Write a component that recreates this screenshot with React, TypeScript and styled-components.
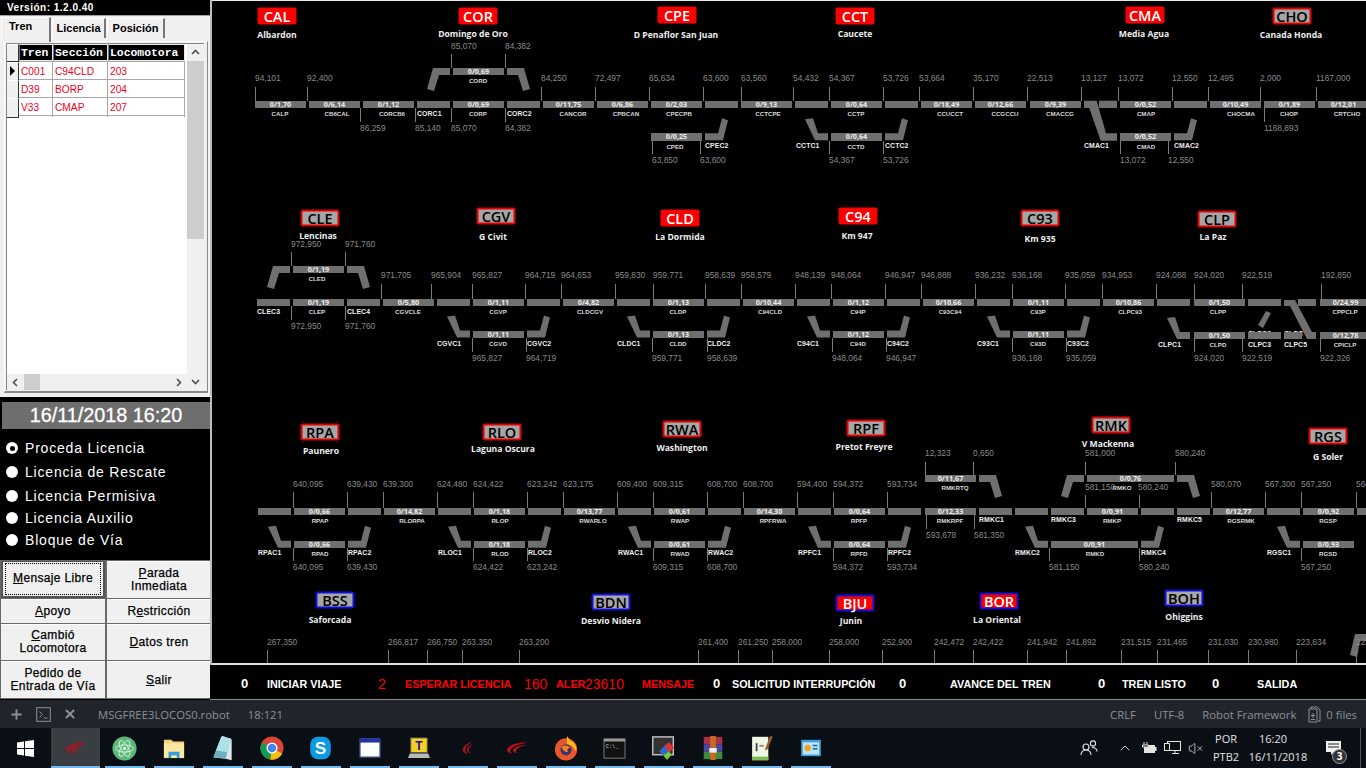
import React from 'react';
import styled, { createGlobalStyle } from 'styled-components';
import { ChevronUp, VolumeX, Plus, X } from 'lucide-react';

const Global = createGlobalStyle`
  html, body { margin: 0; padding: 0; background: #000; }
  * { box-sizing: border-box; }
`;

const OX = 210;
const SANS = '"Liberation Sans", Arial, sans-serif';

const Page = styled.div`
  width: 1366px; height: 768px; overflow: hidden; display: flex; flex-direction: column;
  font-family: ${SANS};
`;
const Main = styled.div`display: flex; height: 700px; background: #000;`;

/* ---------- left panel ---------- */
const Left = styled.aside`width: 210px; height: 700px; display: flex; flex-direction: column; background: #000;`;
const Version = styled.div`
  height: 16px; padding: 0 0 0 7px; background: #000; color: #fff; font-weight: 700; font-size: 10px;
  letter-spacing: .5px; line-height: 16px; border-bottom: 1px solid #a0a0a0; flex: none;
`;
const TabArea = styled.div`height: 381px; flex: none; background: #f0f0f0; padding: 1px 0 0 1px; display: flex; flex-direction: column;`;
const Tabs = styled.div`display: flex; align-items: flex-end; height: 24px; gap: 1px; position: relative; z-index: 1;`;
const Tab = styled.div<{ $active?: boolean; $w: number }>`
  width: ${p => p.$w}px; height: ${p => (p.$active ? 25 : 20)}px; margin-bottom: ${p => (p.$active ? -1 : 3)}px;
  background: #f0f0f0; color: #000; font-weight: 700; font-size: 11px;
  line-height: ${p => (p.$active ? 17 : 19)}px; text-align: ${p => (p.$active ? 'left' : 'center')};
  padding-left: ${p => (p.$active ? 7 : 0)}px;
  border-top: 1px solid #fff; border-left: 1px solid #fff; border-right: 2px solid #777;
`;
const TabBody = styled.div`
  margin: 0 0 0 3px; width: 204px; height: 352px; background: #f0f0f0;
  border-top: 1px solid #fff; border-left: 1px solid #fff; border-right: 1px solid #888; border-bottom: 2px solid #888;
  padding: 1px 0 0 1px;
`;
const GridBox = styled.div`
  width: 198px; height: 347px; background: #fff; border-top: 1px solid #888; border-left: 1px solid #888;
  display: grid; grid-template-columns: 180px 17px; grid-template-rows: 330px 16px;
`;
const GridRows = styled.div`display: flex; flex-direction: column; overflow: hidden; grid-column: 1; grid-row: 1;`;
const GridRow = styled.div<{ $h: number }>`
  display: grid; grid-template-columns: 12px 34px 55px 77px; height: ${p => p.$h}px; border-bottom: 1px solid #a8a8a8; width: 178px; flex: none;
`;
const Indicator = styled.div`
  background: #f0f0f0; border-right: 1px solid #333; border-bottom: 1px solid #333; border-top: 1px solid #fff;
  position: relative; margin-bottom: -1px;
`;
const Arrow = styled.div`
  position: absolute; left: 3px; top: 3px; width: 0; height: 0;
  border-top: 5px solid transparent; border-bottom: 5px solid transparent; border-left: 5px solid #000;
`;
const HeadCell = styled.div`
  background: #000; color: #fff; font: 700 11.4px/16px "Liberation Mono", monospace; padding-left: 1px;
  border: 1px solid #e8e8e8; border-left-color: #777; white-space: nowrap; overflow: hidden;
`;
const Cell = styled.div`
  color: #f00020; font-size: 10.2px; line-height: 19px; padding-left: 2px; border-right: 1px solid #a8a8a8;
`;
const VBar = styled.div`display: flex; flex-direction: column; background: #f0f0f0; grid-column: 2; grid-row: 1 / 3;`;
const HBar = styled.div`display: flex; background: #f0f0f0; height: 16px; align-items: stretch; grid-column: 1; grid-row: 2;`;
const ScrollBtn = styled.div<{ $size: number }>`
  flex: 0 0 ${p => p.$size}px; display: flex; align-items: center; justify-content: center; color: #505050;
`;
const VThumb = styled.div`height: 178px; background: #cdcdcd;`;
const HThumb = styled.div`width: 16px; background: #cdcdcd;`;
const Fill = styled.div`flex: 1;`;

const Lower = styled.div`height: 163px; flex: none; background: #000; padding: 5px 0 0 2px;`;
const DateBar = styled.div`
  height: 27px; background: #6e6e6e; color: #fff; font-size: 19.8px; line-height: 27px; text-align: center;
  -webkit-text-stroke: .3px #fff;
`;
const Radios = styled.div`display: flex; flex-direction: column; padding: 7px 0 0 4px;`;
const RadioRow = styled.label<{ $h: number }>`
  display: flex; align-items: center; gap: 7px; height: ${p => p.$h}px; color: #fff; font-size: 14px; letter-spacing: .8px;
`;
const RadioDot = styled.span<{ $on?: boolean }>`
  width: 12px; height: 12px; border-radius: 50%; flex: none; display: flex; align-items: center; justify-content: center;
  background: radial-gradient(circle at 40% 40%, #fff 55%, #b8b8b8 100%);
  &::after { content: ''; width: 5px; height: 5px; border-radius: 50%; background: ${p => (p.$on ? '#000' : 'transparent')}; }
`;
const Buttons = styled.div`
  height: 139px; flex: none; background: #696969; display: grid; grid-template-columns: 104px 104px; gap: 1px 2px; padding: 1px 0 1px 1px;
`;
const Btn = styled.button<{ $focus?: boolean }>`
  appearance: none; margin: 0; padding: 0; background: #f0f0f0; color: #000; position: relative;
  font: 400 12px/13px ${SANS}; letter-spacing: .35px; -webkit-text-stroke: .25px #000;
  border: ${p => (p.$focus ? '2px solid #555' : '0')};
  border-top: 1px solid ${p => (p.$focus ? '#555' : '#fff')};
  ${p => p.$focus && `&::after { content: ''; position: absolute; inset: 1px 2px; border: 1px dotted #000; }`}
  u { text-decoration: underline; }
`;

/* ---------- right part and diagram ---------- */
const Right = styled.div`flex: 1; display: flex; flex-direction: column; height: 700px; position: relative;`;
const Diagram = styled.div`
  height: 665px; position: relative; overflow: hidden; background: #000;
  box-shadow: inset 2px 0 0 #bdbdbd, inset 0 1px 0 #e8e8e8, inset 0 -2px 0 #e0e0e0;
`;
const Curves = styled.svg`position: absolute; left: 0; top: 0; width: 1156px; height: 665px;`;
const Seg = styled.div.attrs<{ $x: number; $y: number; $w: number }>(p => ({
  style: { left: p.$x - OX, top: p.$y, width: p.$w },
}))`
  position: absolute; height: 7.4px; background: #6f6f6f; color: #ededed; text-align: center;
  font-size: 7.2px; line-height: 7.5px; font-weight: 700; font-family: "Open Sans", sans-serif;
`;
const Km = styled.span.attrs<{ $x: number; $y: number }>(p => ({
  style: { left: p.$x - OX, top: p.$y - 6 },
}))`
  position: absolute; color: #8a8a8a; font-size: 8.4px; line-height: 12px; white-space: nowrap;
`;
const Tick = styled.i.attrs<{ $x: number; $y: number; $h: number }>(p => ({
  style: { left: p.$x - OX, top: p.$y, height: p.$h },
}))`
  position: absolute; width: 1px; background: #7a7a7a;
`;
const SmallName = styled.span.attrs<{ $x: number; $y: number }>(p => ({
  style: { left: p.$x - OX, top: p.$y - 5 },
}))`
  position: absolute; transform: translateX(-50%); color: #d8d8d8; font-size: 6.2px; line-height: 10px; white-space: nowrap; font-weight: 700;
`;
const BigName = styled.span.attrs<{ $x: number; $y: number }>(p => ({
  style: { left: p.$x - OX, top: p.$y - 6 },
}))`
  position: absolute; color: #f0f0f0; font-size: 6.9px; line-height: 12px; letter-spacing: .1px; white-space: nowrap; font-weight: 700;
`;
type BadgeKind = 'red' | 'grey' | 'blueRed' | 'blueGrey';
const Badge = styled.div.attrs<{ $x: number; $y: number; $k: BadgeKind }>(p => ({
  style: { left: p.$x - OX, top: p.$y },
}))`
  position: absolute; transform: translate(-50%, -50%); height: 17px; width: 39px; border-radius: 2px; text-align: center;
  font: 600 14.5px/14px "Open Sans", sans-serif;
  background: ${p => (p.$k === 'red' || p.$k === 'blueRed' ? '#fb0000' : '#a6a6a6')};
  color: ${p => (p.$k === 'red' || p.$k === 'blueRed' ? '#fff' : '#000')};
  border: 2px solid ${p => (p.$k === 'red' ? '#fb0000' : p.$k === 'grey' ? '#e00000' : '#1010d8')};
`;
const Place = styled.span.attrs<{ $x: number; $y: number }>(p => ({
  style: { left: p.$x - OX, top: p.$y - 6 },
}))`
  position: absolute; transform: translateX(-50%); color: #eee; font: 700 8.6px/12px "Open Sans", sans-serif; white-space: nowrap;
`;

const Status = styled.div`
  height: 35px; display: flex; align-items: center; background: #000; padding: 3px 0 0 31px; border-bottom: 1px solid #8a8a8a;
  white-space: nowrap;
`;
const Stat = styled.span.attrs<{ $w: number }>(p => ({ style: { width: p.$w } }))<{ $kind: 'label' | 'num'; $red?: boolean }>`
  flex: none; color: ${p => (p.$red ? '#f00' : '#fff')};
  font: ${p => (p.$kind === 'label' ? '700 10.8px' : p.$red ? '400 14px' : '700 13px')} ${SANS};
`;

/* ---------- atom bar + taskbar ---------- */
const AtomBar = styled.div`
  height: 28px; flex: none; background: #21252b; color: #8b9099; display: flex; align-items: center; font: 400 11.3px "Open Sans", sans-serif;
`;
const AtomTool = styled.span<{ $w: number }>`width: ${p => p.$w}px; flex: none; display: flex; justify-content: center; align-items: center;`;
const AtomText = styled.span<{ $ml?: number }>`margin-left: ${p => p.$ml ?? 0}px; white-space: nowrap;`;
const AtomRight = styled.div`margin-left: auto; display: flex; align-items: center; padding-right: 9px;`;
const FilesIcon = styled.svg`display: block;`;
const Taskbar = styled.div`height: 40px; flex: none; background: #0a0f15; display: flex; align-items: stretch; color: #e8e8e8;`;
const StartBtn = styled.div`width: 51px; flex: none; display: flex; align-items: center; justify-content: center;`;
const TaskItem = styled.div<{ $active?: boolean }>`
  width: 49px; flex: none; display: flex; align-items: center; justify-content: center; position: relative;
  background: ${p => (p.$active ? '#3a3d42' : 'transparent')};
  &::after { content: ''; position: absolute; bottom: 0; height: 2px; background: #76b9ed;
    left: ${p => (p.$active ? 0 : 4.5)}px; right: ${p => (p.$active ? 0 : 4.5)}px; }
`;
const Tray = styled.div`margin-left: auto; display: flex; align-items: center; padding-right: 5px;`;
const TrayCell = styled.div<{ $w: number; $ml?: number }>`
  width: ${p => p.$w}px; margin-left: ${p => p.$ml ?? 0}px; flex: none; display: flex; flex-direction: column; align-items: center; justify-content: center;
  font: 400 11px/18px "Open Sans", sans-serif; color: #e4e4e4; position: relative; white-space: nowrap;
`;
const ClockTime = styled.span`margin-right: 10px;`;
const NotifyBadge = styled.span`
  position: absolute; left: 19px; top: 9px; width: 15px; height: 15px; border-radius: 50%; background: #333; border: 1px solid #999;
  color: #fff; font-size: 10px; line-height: 13px; text-align: center; font-weight: 700;
`;
const EdgeLine = styled.i`width: 1px; height: 40px; background: #555; margin-left: 7px;`;

/* ---------- data ---------- */
type Long = [number, string, string, number, number?];
type Track = { y: number; nameY: number; longs: Long[]; shorts?: number[] };
const tracks: Track[] = [
  { y: 100.7, nameY: 113.5, shorts: [417, 507, 705, 795, 885, 1174], longs: [
    [255, '0/1,70', 'CALP', 280], [309, '0/6,14', 'CB6CAL', 337], [363, '0/1,12', 'CORCB6', 392], [453, '0/0,69', 'CORP', 478],
    [543, '0/11,75', 'CANCOR', 573], [597, '0/6,86', 'CPBCAN', 626], [651, '0/2,03', 'CPECPB', 679], [741, '0/9,13', 'CCTCPE', 768],
    [831, '0/0,64', 'CCTP', 856], [921, '0/18,49', 'CCUCCT', 950], [975, '0/12,66', 'CCGCCU', 1005], [1030, '0/9,39', 'CMACCG', 1060],
    [1120, '0/0,52', 'CMAP', 1146], [1210, '0/10,49', 'CHOCMA', 1241], [1264, '0/1,89', 'CHOP', 1289], [1318, '0/12,01', 'CRTCHO', 1347],
  ] },
  { y: 68, nameY: 81, longs: [[453, '0/0,69', 'CORD', 478]] },
  { y: 133.3, nameY: 146.5, longs: [[651, '0/0,25', 'CPED', 675], [831, '0/0,64', 'CCTD', 856], [1120, '0/0,52', 'CMAD', 1146]] },
  { y: 298.7, nameY: 311.5, shorts: [257, 347, 437, 527, 617, 707, 797, 887, 977, 1067, 1157, 1248], longs: [
    [293, '0/1,19', 'CLEP', 317], [383, '0/5,80', 'CGVCLE', 408], [473, '0/1,11', 'CGVP', 498], [563, '0/4,82', 'CLDCGV', 590],
    [653, '0/1,13', 'CLDP', 678], [743, '0/10,44', 'C94CLD', 770], [833, '0/1,12', 'C94P', 858], [923, '0/10,66', 'C93C94', 950],
    [1013, '0/1,11', 'C93P', 1038], [1103, '0/10,86', 'CLPC93', 1130], [1194, '0/1,50', 'CLPP', 1218], [1320, '0/24,99', 'CPPCLP', 1345],
  ] },
  { y: 266, nameY: 279, longs: [[293, '0/1,19', 'CLED', 317]] },
  { y: 330.5, nameY: 343.5, longs: [[473, '0/1,11', 'CGVD', 498], [653, '0/1,13', 'CLDD', 678], [833, '0/1,12', 'C94D', 858], [1013, '0/1,11', 'C93D', 1038]] },
  { y: 332, nameY: 345, shorts: [1248, 1284], longs: [[1194, '0/1,50', 'CLPD', 1218], [1320, '0/12,78', 'CPICLP', 1345]] },
  { y: 507.7, nameY: 521, shorts: [258, 348, 438, 528, 618, 708, 798, 888, 979, 1015, 1051, 1141, 1177, 1267, 1357], longs: [
    [294, '0/0,66', 'RPAP', 320], [384, '0/14,82', 'RLORPA', 412], [474, '0/1,18', 'RLOP', 500], [564, '0/13,77', 'RWARLO', 593],
    [654, '0/0,61', 'RWAP', 680], [744, '0/14,30', 'RPFRWA', 773], [834, '0/0,64', 'RPFP', 859], [925, '0/12,33', 'RMKRPF', 950],
    [1087, '0/0,91', 'RMKP', 1112], [1213, '0/12,77', 'RGSRMK', 1241], [1303, '0/0,92', 'RGSP', 1328],
  ] },
  { y: 475, nameY: 488, longs: [[925, '0/11,67', 'RMKRTQ', 955], [1087, '0/0,76', 'RMKO', 1122, 87]] },
  { y: 540.7, nameY: 553.5, longs: [[294, '0/0,66', 'RPAD', 320], [474, '0/1,18', 'RLOD', 500], [654, '0/0,61', 'RWAD', 680], [834, '0/0,64', 'RPFD', 859], [1051, '0/0,91', 'RMKD', 1095, 87], [1303, '0/0,93', 'RGSD', 1328]] },
];

const SHAPES: Record<string, number[]> = {
  A: [33, 0, 16, 0, 10, 21, 17, 23, 22, 7, 33, 7],
  B: [0, 0, 17, 0, 23, 21, 16, 23, 11, 7, 0, 7],
  C: [10, -14, 18, -15, 23, 0, 33, 0, 33, 7, 20, 7],
  D: [0, 0, 13, 0, 17, -15, 23, -13, 18, 7, 0, 7],
};
const placed: [string, number, number][] = [
  ['A', 417, 68], ['B', 507, 68], ['D', 705, 133.3], ['C', 795, 133.3], ['D', 885, 133.3], ['D', 1174, 133.3],
  ['A', 257, 266], ['B', 347, 266],
  ...[437, 617, 797, 977].map(x => ['C', x, 330.5] as [string, number, number]),
  ...[527, 707, 887, 1067].map(x => ['D', x, 330.5] as [string, number, number]),
  ['C', 1157, 332],
  ['B', 979, 475], ['A', 1051, 475], ['B', 1177, 475],
  ...[258, 438, 618, 798, 1015, 1267].map(x => ['C', x, 540.7] as [string, number, number]),
  ...[348, 528, 708, 888, 1141].map(x => ['D', x, 540.7] as [string, number, number]),
];
const rawPolys: number[][] = [
  [1084, 100.7, 1096.7, 100.7, 1106, 133.3, 1117, 133.3, 1117, 140.7, 1100.7, 140.7, 1089.3, 108, 1084, 108],
  [1099, 100.7, 1117, 100.7, 1117, 108, 1099, 108],
  [1258, 325, 1266, 311, 1271, 313, 1263, 328],
  [1284, 300, 1295, 300, 1312, 332, 1316, 332, 1316, 339, 1307, 339, 1290, 306, 1284, 306],
  [1298, 299, 1316, 299, 1316, 306, 1298, 306],
  [1350, 655, 1355, 634, 1366, 634, 1366, 641, 1360, 641, 1357, 657],
];
const bigNames: [string, number, number][] = [
  ['CORC1', 417, 114], ['CORC2', 507, 114], ['CPEC2', 705, 146], ['CCTC1', 796, 146], ['CCTC2', 885, 146], ['CMAC1', 1084, 146], ['CMAC2', 1174, 146],
  ['CLEC3', 257, 312], ['CLEC4', 347, 312],
  ['CGVC1', 437, 344], ['CGVC2', 527, 344], ['CLDC1', 617, 344], ['CLDC2', 707, 344], ['C94C1', 797, 344], ['C94C2', 887, 344], ['C93C1', 977, 344], ['C93C2', 1067, 344],
  ['CLPC1', 1158, 345], ['CLPC3', 1248, 345], ['CLPC5', 1284, 345], ['CLPC3', 1248, 333.5], ['CLPC', 1284, 333.5],
  ['RPAC1', 258, 553], ['RPAC2', 348, 553], ['RLOC1', 438, 553], ['RLOC2', 528, 553], ['RWAC1', 618, 553], ['RWAC2', 708, 553], ['RPFC1', 798, 553], ['RPFC2', 888, 553],
  ['RMKC2', 1015, 553], ['RMKC4', 1141, 553], ['RGSC1', 1267, 553], ['RMKC1', 979, 520], ['RMKC3', 1051, 520], ['RMKC5', 1177, 520],
];
type KmGroup = { y: number; t0: number; t1: number; items: [number, string][] };
const kmGroups: KmGroup[] = [
  { y: 78, t0: 87, t1: 101, items: [[255, '94,101'], [307, '92,400'], [541, '84,250'], [595, '72,497'], [649, '65,634'], [703, '63,600'], [741, '63,560'], [793, '54,432'], [829, '54,367'], [883, '53,726'], [919, '53,664'], [973, '35,170'], [1027, '22,513'], [1081, '13,127'], [1118, '13,072'], [1172, '12,550'], [1208, '12,495'], [1260, '2,000'], [1316, '1167,000']] },
  { y: 127.5, t0: 108, t1: 122, items: [[360, '86,259'], [415, '85,140'], [451, '85,070'], [505, '84,382'], [1264, '1168,893']] },
  { y: 46, t0: 54, t1: 68, items: [[451, '85,070'], [505, '84,382']] },
  { y: 160, t0: 141, t1: 154, items: [[652, '63,850'], [700, '63,600'], [829, '54,367'], [883, '53,726'], [1120, '13,072'], [1168, '12,550']] },
  { y: 244, t0: 252, t1: 266, items: [[291, '972,950'], [345, '971,760']] },
  { y: 275, t0: 284, t1: 299, items: [[381, '971,705'], [431, '965,904'], [472, '965,827'], [525, '964,719'], [561, '964,653'], [615, '959,830'], [653, '959,771'], [705, '958,639'], [741, '958,579'], [795, '948,139'], [831, '948,064'], [885, '946,947'], [921, '946,888'], [975, '936,232'], [1012, '936,168'], [1065, '935,059'], [1102, '934,953'], [1156, '924,088'], [1194, '924,020'], [1242, '922,519'], [1321, '192,850']] },
  { y: 326, t0: 306, t1: 320, items: [[291, '972,950'], [345, '971,760']] },
  { y: 358, t0: 338, t1: 352, items: [[472, '965,827'], [526, '964,719'], [652, '959,771'], [707, '958,639'], [832, '948,064'], [886, '946,947'], [1012, '936,168'], [1066, '935,059'], [1194, '924,020'], [1242, '922,519'], [1320, '922,326']] },
  { y: 453, t0: 462, t1: 475, items: [[925, '12,323'], [973, '0,650'], [1085, '581,000'], [1175, '580,240']] },
  { y: 484, t0: 492, t1: 508, items: [[293, '640,095'], [347, '639,430'], [383, '639,300'], [437, '624,480'], [473, '624,422'], [527, '623,242'], [563, '623,175'], [617, '609,400'], [653, '609,315'], [707, '608,700'], [743, '608,700'], [797, '594,400'], [833, '594,372'], [887, '593,734'], [1211, '580,070'], [1265, '567,300'], [1301, '567,250'], [1356, '566']] },
  { y: 535, t0: 515, t1: 529, items: [[926, '593,678'], [974, '581,350']] },
  { y: 567, t0: 548, t1: 561, items: [[293, '640,095'], [347, '639,430'], [473, '624,422'], [527, '623,242'], [653, '609,315'], [707, '608,700'], [833, '594,372'], [887, '593,734'], [1049, '581,150'], [1139, '580,240'], [1301, '567,250']] },
  { y: 642, t0: 650, t1: 663, items: [[267, '267,350'], [388, '266,817'], [427, '266,750'], [462, '263,350'], [519, '263,200'], [698, '261,400'], [738, '261,250'], [772, '258,000'], [829, '258,000'], [882, '252,900'], [934, '242,472'], [973, '242,422'], [1027, '241,942'], [1066, '241,892'], [1121, '231,515'], [1157, '231,465'], [1208, '231,030'], [1248, '230,980'], [1296, '223,634'], [1356, '223']] },
];
const freeKms: [number, number, string][] = [[1085, 487, '581,150'], [1138, 487, '580,240']];
const freeTicks: [number, number, number][] = [[1085, 495, 13], [1139, 495, 13]];

const badges: [string, number, number, BadgeKind][] = [
  ['CAL', 277, 16, 'red'], ['COR', 478, 16, 'red'], ['CPE', 677, 15, 'red'], ['CCT', 855, 16, 'red'], ['CMA', 1145, 15, 'red'], ['CHO', 1292, 16, 'grey'],
  ['CLE', 320, 218, 'grey'], ['CGV', 496, 216, 'grey'], ['CLD', 680, 218, 'red'], ['C94', 858, 216, 'red'], ['C93', 1040, 218, 'grey'], ['CLP', 1217, 219, 'grey'],
  ['RPA', 320, 432, 'grey'], ['RLO', 502, 432, 'grey'], ['RWA', 682, 429, 'grey'], ['RPF', 866, 428, 'grey'], ['RMK', 1111, 425, 'grey'], ['RGS', 1328, 436, 'grey'],
  ['BSS', 335, 600, 'blueGrey'], ['BDN', 611, 602, 'blueGrey'], ['BJU', 855, 603, 'blueRed'], ['BOR', 999, 601, 'blueRed'], ['BOH', 1184, 598, 'blueGrey'],
];
const places: [string, number, number][] = [
  ['Albardon', 277, 35], ['Domingo de Oro', 473, 34], ['D Penaflor San Juan', 676, 35], ['Caucete', 855, 34], ['Media Agua', 1144, 34], ['Canada Honda', 1291, 35],
  ['Lencinas', 318, 236], ['G Civit', 493, 237], ['La Dormida', 680, 237], ['Km 947', 857, 236], ['Km 935', 1040, 239], ['La Paz', 1213, 237],
  ['Paunero', 321, 451], ['Laguna Oscura', 503, 449], ['Washington', 682, 448], ['Pretot Freyre', 864, 447], ['V Mackenna', 1108, 444], ['G Soler', 1328, 457],
  ['Saforcada', 330, 620], ['Desvio Nidera', 611, 621], ['Junin', 851, 621], ['La Oriental', 997, 620], ['Ohiggins', 1184, 617],
];
const stats: [number, string, 'label' | 'num', boolean?][] = [
  [241, '0', 'num'], [267, 'INICIAR VIAJE', 'label'], [378, '2', 'num', true], [405, 'ESPERAR LICENCIA', 'label', true], [524, '160', 'num', true],
  [556, 'ALER', 'label', true], [585, '23610', 'num', true], [642, 'MENSAJE', 'label', true], [713, '0', 'num'], [732, 'SOLICITUD INTERRUPCIÓN', 'label'],
  [899, '0', 'num'], [950, 'AVANCE DEL TREN', 'label'], [1098, '0', 'num'], [1122, 'TREN LISTO', 'label'], [1212, '0', 'num'], [1257, 'SALIDA', 'label'],
];

/* ---------- drawings ---------- */
const Swoosh = ({ w = 22 }: { w?: number }) => (
  <svg width={w} height={w * 0.55} viewBox="0 0 30 16.5">
    <path fill="#b5121b" d="M29 1C17 0 5 4 2 9c-2 3.5 2 6 7 7-3.5-2-4-3.5-2.5-6C10 5.5 19 2.5 29 1z" />
    <path fill="#b5121b" d="M27 4C19 4 12 6.5 10 10c-1 3 1 5 5 5.5-2-1.5-2-2.5-1-4.5 2-3 7-5.500 13-7z" />
  </svg>
);
const TIcons: React.ReactNode[] = [
  <Swoosh key="a" />,
  <svg key="b" width="25" height="25" viewBox="0 0 28 28"><circle cx="14" cy="14" r="13.5" fill="#5cb87a" /><g fill="none" stroke="#d8f2dd" strokeWidth="1"><ellipse cx="14" cy="14" rx="10" ry="4" /><ellipse cx="14" cy="14" rx="10" ry="4" transform="rotate(60 14 14)" /><ellipse cx="14" cy="14" rx="10" ry="4" transform="rotate(120 14 14)" /></g><circle cx="14" cy="14" r="2" fill="#d8f2dd" /></svg>,
  <svg key="c" width="22" height="22" viewBox="0 0 24 24"><path d="M1 3h8l2 2h12v18H1z" fill="#f5d37a" /><rect x="1" y="7" width="22" height="16" fill="#fbe7a2" /><path d="M6 23v-7h12v7h-3v-3H9v3z" fill="#2f9fe0" /></svg>,
  <svg key="d" width="24" height="26" viewBox="0 0 26 30"><path d="M12 1l11 4v24l-8-2-13-1z" fill="#dfe7ea" /><path d="M11 2L2 25l14 3 6-24z" fill="#6fb0c0" /><path d="M11 2L5 18l14 2 3-16z" fill="#aee0e8" /></svg>,
  <svg key="e" width="24" height="24" viewBox="0 0 26 26"><circle cx="13" cy="13" r="12.5" fill="#db4437" /><path d="M13 13L24 19A12.5 12.5 0 0 1 11 25.4z" fill="#f4c20d" /><path d="M13 13L11 25.4A12.5 12.5 0 0 1 2 7z" fill="#0f9d58" /><circle cx="13" cy="13" r="6" fill="#fff" /><circle cx="13" cy="13" r="4.6" fill="#4285f4" /></svg>,
  <svg key="f" width="23" height="24" viewBox="0 0 26 28"><rect x="1" y="1" width="24" height="26" rx="9" fill="#0a9be0" /><text x="13" y="21" textAnchor="middle" fontFamily="Liberation Sans" fontWeight="700" fontSize="20" fill="#fff">S</text></svg>,
  <svg key="g" width="22" height="20" viewBox="0 0 24 22"><rect x="1" y="1" width="22" height="20" fill="#fff" stroke="#405090" strokeWidth="1.4" /><rect x="1" y="1" width="22" height="4" fill="#2030b0" /></svg>,
  <svg key="h" width="24" height="22" viewBox="0 0 26 24"><rect x="4" y="1" width="18" height="16" fill="#f5d020" stroke="#555" /><text x="13" y="14" textAnchor="middle" fontFamily="Liberation Sans" fontWeight="700" fontSize="13" fill="#1010c0">T</text><path d="M3 18h20l2 5H1z" fill="#b8b8b8" /></svg>,
  <svg key="i" width="12" height="14" viewBox="0 0 14 16"><path fill="#a8141e" d="M13 1C6 2 1 6 1 10c0 3 3 5 6 5-2-1-3-3-3-5 0-4 4-7 9-9z" /><path fill="#a8141e" d="M12 4C8 5 6 8 6 10c0 2 1 4 4 4-1-1-2-2-2-4s2-4 4-6z" /></svg>,
  <Swoosh key="j" />,
  <svg key="k" width="24" height="26" viewBox="0 0 26 28"><circle cx="13" cy="15.5" r="12" fill="#e8562a" /><path d="M14 1c3 3 2 5 6 6 4 3 5 7 4 11-3-6-7-8-10-8z" fill="#ffb81c" /><circle cx="13" cy="16" r="6" fill="#37356f" /><path d="M8 13c3-3 8-2 10 1-3-1-4 2-3 4-2 1-5 0-7-5z" fill="#f58220" /></svg>,
  <svg key="l" width="23" height="21" viewBox="0 0 26 24"><rect x="1" y="1" width="24" height="22" fill="#111" stroke="#888" /><rect x="1" y="1" width="24" height="3" fill="#999" /><text x="3" y="11" fontFamily="Liberation Mono" fontSize="6" fill="#ddd">C:\_</text></svg>,
  <svg key="m" width="25" height="27" viewBox="0 0 28 30"><rect x="2" y="2" width="23" height="20" fill="#333" stroke="#ccc" strokeWidth="1.5" /><path d="M15 12l5-4 6 6-6 6z" fill="#d33" /><path d="M9 18l6-6 5 6-6 5z" fill="#36c" /><path d="M14 23l6-5 3 4-5 6z" fill="#7c3" /></svg>,
  <svg key="n" width="24" height="26" viewBox="0 0 24 28"><rect x="2" y="2" width="20" height="8" fill="#a83048" /><rect x="2" y="10" width="20" height="8" fill="#4a4a9c" /><rect x="2" y="18" width="20" height="8" fill="#3f8a3f" /><rect x="9" y="1" width="6" height="26" fill="#c96a20" /><rect x="8" y="14" width="8" height="5" fill="#eee" /></svg>,
  <svg key="o" width="24" height="27" viewBox="0 0 26 30"><path d="M2 2h18v26H2z" fill="#eef5e4" /><path d="M2 24h18v4H2z" fill="#7bbd4c" /><rect x="6" y="9" width="2" height="9" fill="#444" /><rect x="10" y="11" width="5" height="2" fill="#888" /><path d="M22 1l3 1-6 14-3 1z" fill="#a05a20" /></svg>,
  <svg key="p" width="24" height="18" viewBox="0 0 24 22"><rect x="0" y="1" width="24" height="20" fill="#3aa0e0" /><rect x="2" y="4" width="20" height="15" fill="#bfe3f7" /><circle cx="8" cy="11" r="4" fill="#f0a020" /><rect x="14" y="7" width="6" height="2" fill="#2070b0" /><rect x="14" y="11" width="6" height="2" fill="#2070b0" /></svg>,
];

const Caret = ({ d }: { d: string }) => (
  <svg width="9" height="9" viewBox="0 0 9 9"><path d={d} fill="none" stroke="currentColor" strokeWidth="1.6" /></svg>
);

export default function App() {
  const headRow = ['Tren', 'Sección', 'Locomotora'];
  const rows = [
    ['C001', 'C94CLD', '203'],
    ['D39', 'BORP', '204'],
    ['V33', 'CMAP', '207'],
  ];
  return (
    <Page>
      <Global />
      <Main>
        <Left>
          <Version>Versión: 1.2.0.40</Version>
          <TabArea>
            <Tabs>
              <Tab $active $w={50}>Tren</Tab>
              <Tab $w={54}>Licencia</Tab>
              <Tab $w={58}>Posición</Tab>
            </Tabs>
            <TabBody>
              <GridBox>
                <GridRows>
                  <GridRow $h={18}>
                    <Indicator />
                    {headRow.map(h => <HeadCell key={h}>{h}</HeadCell>)}
                  </GridRow>
                  {rows.map((r, i) => (
                    <GridRow $h={18} key={r[0]}>
                      <Indicator>{i === 0 && <Arrow />}</Indicator>
                      {r.map(c => <Cell key={c}>{c}</Cell>)}
                    </GridRow>
                  ))}
                </GridRows>
                <VBar>
                  <ScrollBtn $size={17}><Caret d="M1 6l3.5-3.5L8 6" /></ScrollBtn>
                  <VThumb />
                  <Fill />
                  <ScrollBtn $size={17}><Caret d="M1 3l3.5 3.5L8 3" /></ScrollBtn>
                </VBar>
                <HBar>
                  <ScrollBtn $size={17}><Caret d="M6 1L2.5 4.5 6 8" /></ScrollBtn>
                  <HThumb />
                  <Fill />
                  <ScrollBtn $size={17}><Caret d="M3 1l3.5 3.5L3 8" /></ScrollBtn>
                </HBar>
              </GridBox>
            </TabBody>
          </TabArea>
          <Lower>
            <DateBar>16/11/2018 16:20</DateBar>
            <Radios>
              <RadioRow $h={24}><RadioDot $on />Proceda Licencia</RadioRow>
              <RadioRow $h={24}><RadioDot />Licencia de Rescate</RadioRow>
              <RadioRow $h={23}><RadioDot />Licencia Permisiva</RadioRow>
              <RadioRow $h={22}><RadioDot />Licencia Auxilio</RadioRow>
              <RadioRow $h={22}><RadioDot />Bloque de Vía</RadioRow>
            </Radios>
          </Lower>
          <Buttons>
            <Btn $focus><u>M</u>ensaje Libre</Btn>
            <Btn><u>P</u>arada<br />Inmediata</Btn>
            <Btn><u>A</u>poyo</Btn>
            <Btn>R<u>e</u>stricción</Btn>
            <Btn><u>C</u>ambió<br />Locomotora</Btn>
            <Btn><u>D</u>atos tren</Btn>
            <Btn>Pedido de<br />Entrada de Vía</Btn>
            <Btn><u>S</u>alir</Btn>
          </Buttons>
        </Left>
        <Right>
          <Diagram>
            {bigNames.map(([t, x, y], i) => <BigName key={i} $x={x} $y={y}>{t}</BigName>)}
            <Curves viewBox="0 0 1156 665">
              {placed.map(([k, x, y], i) => {
                const s = SHAPES[k];
                const pts: string[] = [];
                for (let j = 0; j < s.length; j += 2) pts.push(`${s[j] + x - OX},${s[j + 1] + y}`);
                return <polygon key={i} points={pts.join(' ')} fill="#6f6f6f" />;
              })}
              {rawPolys.map((s, i) => {
                const pts: string[] = [];
                for (let j = 0; j < s.length; j += 2) pts.push(`${s[j] - OX},${s[j + 1]}`);
                return <polygon key={i} points={pts.join(' ')} fill="#6f6f6f" />;
              })}
            </Curves>
            {tracks.map((t, i) => (
              <React.Fragment key={i}>
                {t.shorts?.map(x => <Seg key={x} $x={x} $y={t.y} $w={x === 1284 ? 18 : 33} />)}
                {t.longs.map(([x, v, n, c, w]) => (
                  <React.Fragment key={n}>
                    <Seg $x={x} $y={t.y} $w={w ?? 51}>{v}</Seg>
                    <SmallName $x={c} $y={t.nameY}>{n}</SmallName>
                  </React.Fragment>
                ))}
              </React.Fragment>
            ))}
            {kmGroups.map((g, i) => (
              <React.Fragment key={i}>
                {g.items.map(([x, v]) => (
                  <React.Fragment key={x}>
                    <Km $x={x} $y={g.y}>{v}</Km>
                    <Tick $x={x} $y={g.t0} $h={g.t1 - g.t0} />
                  </React.Fragment>
                ))}
              </React.Fragment>
            ))}
            {freeKms.map(([x, y, v]) => <Km key={x} $x={x} $y={y}>{v}</Km>)}
            {freeTicks.map(([x, y, h]) => <Tick key={x} $x={x} $y={y} $h={h} />)}
            {badges.map(([t, x, y, k]) => <Badge key={t} $x={x} $y={y} $k={k}>{t}</Badge>)}
            {places.map(([t, x, y]) => <Place key={t} $x={x} $y={y}>{t}</Place>)}
          </Diagram>
          <Status>
            {stats.map(([x, t, k, red], i) => (
              <Stat key={i} $w={(stats[i + 1]?.[0] ?? 1366) - x} $kind={k} $red={red}>{t}</Stat>
            ))}
          </Status>
        </Right>
      </Main>
      <AtomBar>
        <AtomTool $w={32}><Plus size={15} strokeWidth={3} /></AtomTool>
        <AtomTool $w={23}>
          <svg width="15" height="15" viewBox="0 0 15 15"><rect x=".7" y=".7" width="13.6" height="13.6" fill="none" stroke="currentColor" /><path d="M3.5 4.5l3 3-3 3M7.5 11h4" fill="none" stroke="currentColor" /></svg>
        </AtomTool>
        <AtomTool $w={29}><X size={14} strokeWidth={3.4} /></AtomTool>
        <AtomText $ml={14}>MSGFREE3LOCOS0.robot</AtomText>
        <AtomText $ml={18}>18:121</AtomText>
        <AtomRight>
          <AtomText>CRLF</AtomText>
          <AtomText $ml={18}>UTF-8</AtomText>
          <AtomText $ml={18}>Robot Framework</AtomText>
          <AtomText $ml={12}>
            <FilesIcon width="13" height="17" viewBox="0 0 13 17"><path d="M3 3V1h6l3 3v11h-2M1 3h8v13H1zM5 7v5M3 9.5h4M3 13.5h4" fill="none" stroke="currentColor" /></FilesIcon>
          </AtomText>
          <AtomText $ml={5}>0 files</AtomText>
        </AtomRight>
      </AtomBar>
      <Taskbar>
        <StartBtn>
          <svg width="17" height="17" viewBox="0 0 17 17"><path fill="#fff" d="M0 2.4l7-1v6.6H0zM8 1.2L17 0v8H8zM0 9h7v6.6l-7-1zM8 9h9v8l-9-1.2z" /></svg>
        </StartBtn>
        {TIcons.map((ic, i) => <TaskItem key={i} $active={i === 0}>{ic}</TaskItem>)}
        <Tray>
          <TrayCell $w={24}>
            <svg width="18" height="16" viewBox="0 0 18 16"><g fill="none" stroke="#e4e4e4" strokeWidth="1.1"><circle cx="6" cy="7" r="3" /><path d="M1 15c0-3 2-5 5-5s5 2 5 5" /><circle cx="13" cy="3.5" r="2.6" /><path d="M12 7.5c3 0 5 1.5 5 4" /></g></svg>
          </TrayCell>
          <TrayCell $w={24} $ml={12}><ChevronUp size={16} color="#e4e4e4" strokeWidth={1.4} /></TrayCell>
          <TrayCell $w={24}>
            <svg width="16" height="12" viewBox="0 0 16 12"><rect x="3" y="3" width="11" height="8" fill="#e4e4e4" /><rect x="14" y="5" width="1.5" height="4" fill="#e4e4e4" /><path d="M3 0v3M6 0v3M1.5 3h6v2h-6z" stroke="#e4e4e4" fill="#111" /></svg>
          </TrayCell>
          <TrayCell $w={23}>
            <svg width="17" height="15" viewBox="0 0 17 15"><g fill="none" stroke="#e4e4e4"><rect x="3.5" y=".5" width="13" height="9" /><path d="M8 12.5h7M11 9.5v3" /><rect x=".5" y="2.5" width="5" height="7" fill="#111" /></g></svg>
          </TrayCell>
          <TrayCell $w={22}><VolumeX size={15} color="#e4e4e4" strokeWidth={1.2} /></TrayCell>
          <TrayCell $w={40}><span>POR</span><span>PTB2</span></TrayCell>
          <TrayCell $w={58} $ml={3}><ClockTime>16:20</ClockTime><span>16/11/2018</span></TrayCell>
          <TrayCell $w={40} $ml={6}>
            <svg width="17" height="17" viewBox="0 0 17 17"><path fill="#f0f0f0" d="M1 1h15v11H9l-3 3v-3H1z" /><path stroke="#222" d="M3 4h11M3 7h11" /></svg>
            <NotifyBadge>3</NotifyBadge>
          </TrayCell>
          <EdgeLine />
        </Tray>
      </Taskbar>
    </Page>
  );
}
